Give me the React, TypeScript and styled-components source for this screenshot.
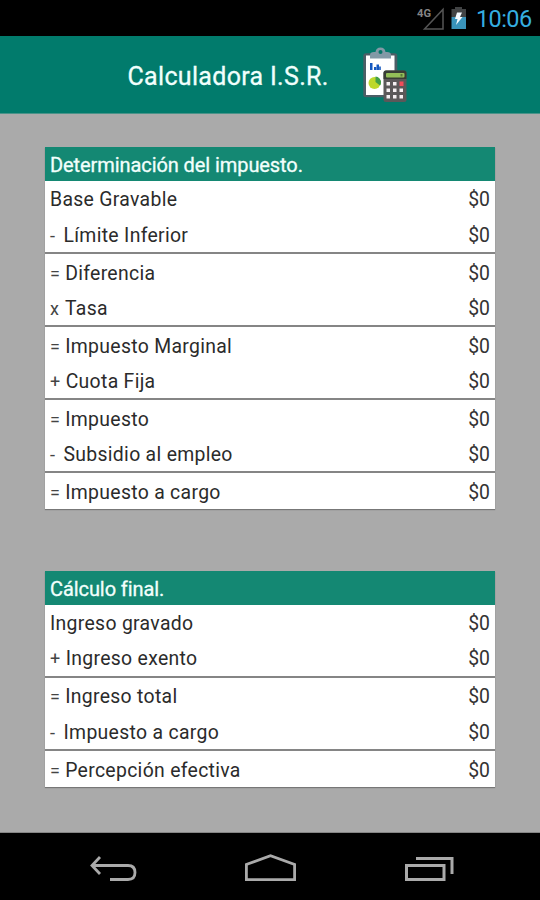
import React from 'react';
import styled, { createGlobalStyle } from 'styled-components';

const GlobalStyle = createGlobalStyle`
  *, *::before, *::after { box-sizing: border-box; }
  body { margin: 0; background: #aaa; font-family: Roboto, sans-serif; }
`;

const Screen = styled.div`
  width: 540px;
  height: 900px;
  display: flex;
  flex-direction: column;
  overflow: hidden;
  background: #aaaaaa;
`;

const StatusBar = styled.div`
  height: 36px;
  flex: none;
  display: flex;
  align-items: center;
  justify-content: flex-end;
  padding-right: 8px;
  background: #000;
`;

const StatusIcons = styled.svg`
  flex: none;
  margin-right: 8px;
`;

const Clock = styled.span`
  width: 56px;
  padding-top: 1px;
  font-size: 23.5px;
  line-height: 36px;
  letter-spacing: -0.6px;
  white-space: nowrap;
  color: #35aee0;
`;

const AppBar = styled.header`
  height: 78px;
  flex: none;
  display: flex;
  align-items: center;
  padding-left: 127.5px;
  background: #017b6c;
  border-bottom: 1px solid #4a9389;
`;

const Title = styled.h1`
  width: 234.5px;
  margin: 0;
  padding-top: 5px;
  font-size: 25px;
  line-height: 30px;
  font-weight: 400;
  letter-spacing: 0.32px;
  white-space: nowrap;
  color: #f0fffc;
  -webkit-text-stroke: 0.3px #f0fffc;
`;

const Content = styled.main`
  flex: 1;
  display: flex;
  flex-direction: column;
  gap: 61.6px;
  padding: 33px 45px 0;
  border-bottom: 1px solid #858585;
`;

const Card = styled.section`
  background: #fff;
  box-shadow: 0 1px 1px 0 #777;
`;

const CardTitle = styled.h2`
  height: 34.4px;
  margin: 0;
  padding-left: 5px;
  font-size: 20px;
  line-height: 36px;
  font-weight: 400;
  letter-spacing: -0.08px;
  color: #f2fffc;
  -webkit-text-stroke: 0.3px #f2fffc;
  background: #148873;
`;

const Group = styled.div`
  & + & {
    border-top: 2px solid #858585;
    padding-top: 0.8px;
  }
`;

const Row = styled.div`
  height: 35.2px;
  display: flex;
  padding: 0 5px;
  font-size: 19.4px;
  line-height: 38px;
  color: #2b2b2b;
`;

const Operator = styled.span<{ $width: number }>`
  flex: none;
  width: ${p => p.$width}px;
  font-size: 18px;
  color: #444;
`;

const Label = styled.span`
  flex: 1;
  letter-spacing: 0.31px;
  white-space: nowrap;
`;

const Amount = styled.span`
  color: #333;
`;

const NavBar = styled.nav`
  height: 67px;
  flex: none;
  display: flex;
  align-items: center;
  justify-content: space-between;
  padding: 3px 86px 0 89px;
  background: #000;
`;

type Operation = '' | '-' | '=' | '+' | 'x';
type Line = [operation: Operation, label: string];

const operatorWidth: Record<Operation, number> = { '': 0, '-': 13.5, '=': 15.2, '+': 15.7, x: 15 };

const tax: Line[][] = [
  [['', 'Base Gravable'], ['-', 'Límite Inferior']],
  [['=', 'Diferencia'], ['x', 'Tasa']],
  [['=', 'Impuesto Marginal'], ['+', 'Cuota Fija']],
  [['=', 'Impuesto'], ['-', 'Subsidio al empleo']],
  [['=', 'Impuesto a cargo']],
];

const total: Line[][] = [
  [['', 'Ingreso gravado'], ['+', 'Ingreso exento']],
  [['=', 'Ingreso total'], ['-', 'Impuesto a cargo']],
  [['=', 'Percepción efectiva']],
];

function Table({ title, groups }: { title: string; groups: Line[][] }) {
  return (
    <Card>
      <CardTitle>{title}</CardTitle>
      {groups.map((lines, i) => (
        <Group key={i}>
          {lines.map(([operation, label]) => (
            <Row key={label}>
              {operation && <Operator $width={operatorWidth[operation]}>{operation}</Operator>}
              <Label>{label}</Label>
              <Amount>$0</Amount>
            </Row>
          ))}
        </Group>
      ))}
    </Card>
  );
}

function ReportIcon() {
  return (
    <svg width="46" height="58" viewBox="0 0 46 58">
      <rect x="1.3" y="7.3" width="34" height="44" rx="2.5" fill="#4c5e66" />
      <rect x="4" y="9.5" width="28.5" height="39.5" fill="#fff" />
      <path d="M8 12.5V9q0-3 4-3h1.5Q14 1.5 18.5 1.5T23.500 6H25q4 0 4 3v3.500z" fill="#8299a6" />
      <circle cx="18.500" cy="6" r="2" fill="#087569" />
      <path d="M8 17h2.500v7H8zM12 21h2.200v3H12zM14.500 18.500H17V24h-2.500zM17.200 20.500h1.600V24h-1.600z" fill="#1558c0" />
      <circle cx="12.500" cy="37" r="6" fill="#bed82c" />
      <path d="M13.500 36v-5.500a6 6 0 0 1 5.500 6.500q0 1.500-1 2.500z" fill="#43a047" />
      <rect x="21.500" y="24.500" width="23" height="31.500" rx="2.500" fill="#5b5859" />
      <path d="M21.500 33v-6q0-2.500 2.500-2.500h18q2.500 0 2.500 2.500v6z" fill="#393d35" />
      <rect x="24" y="27" width="18.500" height="4.500" rx="1" fill="#94bf58" />
      <path d="M38.500 28h2v2.500h-2z" fill="#59783b" />
      <path d="M24.500 36h3.500v3.500h-3.500zM31 36h3.500v3.500H31zM24.500 42.500h3.500V46h-3.500zM31 42.500h3.500V46H31zM37.500 42.500H41V46h-3.500zM24.500 49h3.500v3.500h-3.500zM31 49h3.500v3.500H31zM37.500 49H41v3.500h-3.500z" fill="#f5f0f2" />
      <path d="M37.500 35.500H41.500V40H37.500z" fill="#f04d5a" />
    </svg>
  );
}

export default function App() {
  return (
    <>
      <GlobalStyle />
      <Screen>
        <StatusBar>
          <StatusIcons width="52" height="36" viewBox="416 0 52 36">
            <text x="417" y="17" fontSize="11.5" fontWeight="700" fill="#858585" textLength="14" lengthAdjust="spacingAndGlyphs">4G</text>
            <path d="M424.500 29L443 9.500V29z" fill="none" stroke="#555" strokeWidth="1.500" />
            <path d="M451.500 9H455V7h7v2h4v8h-14.500z" fill="#414344" />
            <path d="M451.500 17H466v12h-14.500z" fill="#3993ba" />
            <path d="M457 12.500h5l-2 4.500h2.500l-6.500 8 1.500-6H455z" fill="#f4faff" />
          </StatusIcons>
          <Clock>10:06</Clock>
        </StatusBar>
        <AppBar>
          <Title>Calculadora I.S.R.</Title>
          <ReportIcon />
        </AppBar>
        <Content>
          <Table title="Determinación del impuesto." groups={tax} />
          <Table title="Cálculo final." groups={total} />
        </Content>
        <NavBar>
          <svg width="48" height="30" viewBox="89 853 48 30" fill="none" stroke="#aaa" strokeWidth="2.800">
            <path d="M100 857l-8 8.500 8 8.500M92 865.500h36q7 0 7 7t-7 7h-18" />
          </svg>
          <svg width="52" height="30" viewBox="244 853 52 30" fill="none" stroke="#aaa" strokeWidth="2.800">
            <path d="M246.400 879.600V864.500L270.500 855.700l24.100 8.800v15.100z" />
          </svg>
          <svg width="51" height="30" viewBox="403 853 51 30" fill="none" stroke="#aaa" strokeWidth="3">
            <path d="M406.500 865.500h37.500v14h-37.500zM416 858.500h36V874" />
          </svg>
        </NavBar>
      </Screen>
    </>
  );
}
